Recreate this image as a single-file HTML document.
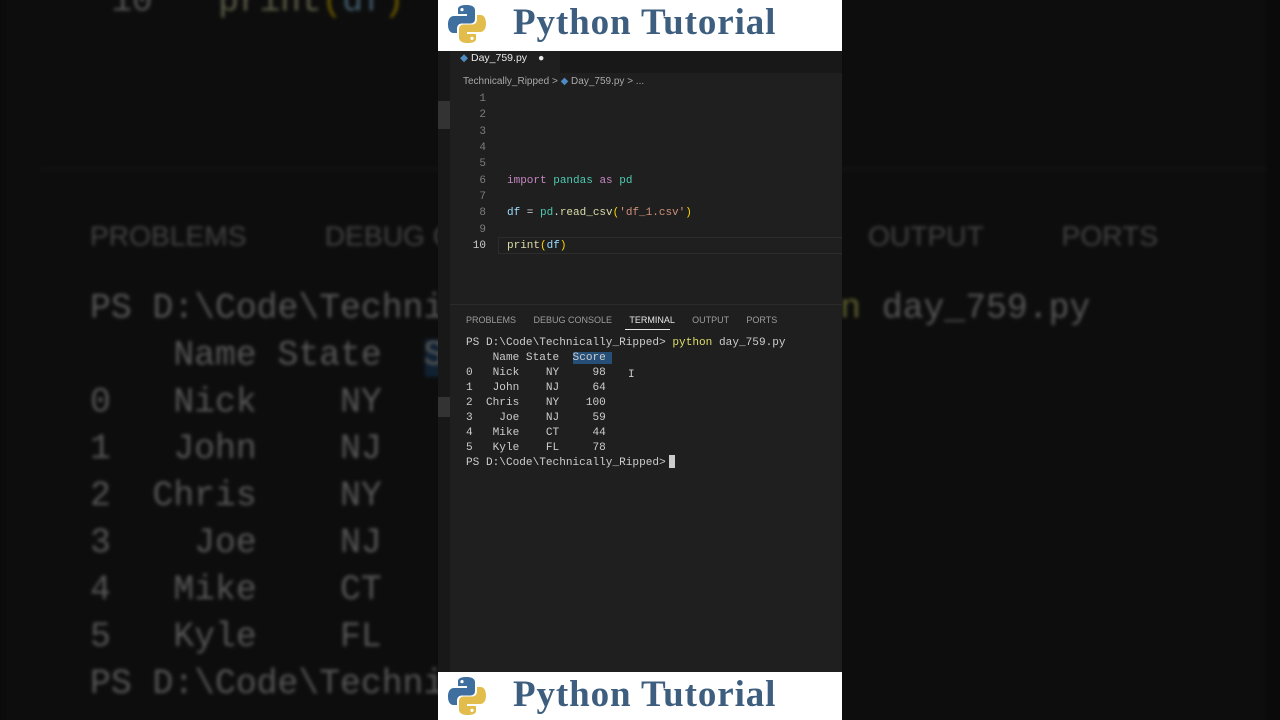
<!DOCTYPE html>
<html><head><meta charset="utf-8">
<style>
*{margin:0;padding:0;box-sizing:border-box}
html,body{width:1280px;height:720px;overflow:hidden;background:#0a0a0a}
#root{position:relative;width:1280px;height:720px;overflow:hidden;clip-path:inset(0)}
#clip{position:absolute;left:0;top:0;width:1280px;height:720px;overflow:hidden;clip-path:inset(0)}
.mono{font-family:"Liberation Mono","DejaVu Sans Mono",monospace}
.sans{font-family:"Liberation Sans","DejaVu Sans",sans-serif}
.layer{position:absolute;left:0;top:0;width:1280px;height:720px}
.bg{transform-origin:0 0;transform:translate(-1368.6px,-765.6px) scale(3.13);filter:brightness(0.42) blur(0.6px)}
.vs{position:absolute;left:438px;top:51px;width:404px;height:621px;background:#1f1f1f;overflow:hidden}
.strip{position:absolute;left:0;top:0;width:12px;height:621px;background:#181818}
.tabbar{position:absolute;left:12px;top:0;width:392px;height:22px;background:#181818}
.tab{position:absolute;left:0;top:0;width:110px;height:22px;background:#1f1f1f;color:#e8e8e8;font-size:10.5px;line-height:12px;padding:1px 0 0 10px}
.ln{position:absolute;left:30px;width:18px;text-align:right;color:#7d7d7d;font-size:11px}
.code{position:absolute;left:69px;font-size:11px;color:#d4d4d4;white-space:pre}
.term{position:absolute;left:28px;font-size:11.1px;color:#cccccc;white-space:pre;line-height:15px}
.hdr{position:absolute;left:438px;width:404px;height:51px;background:#fff;overflow:hidden}
.hdr span{position:absolute;left:75px;top:1px;font-family:"Liberation Serif","DejaVu Serif",serif;font-weight:bold;font-size:37px;color:#3d5e7e;letter-spacing:0.9px;white-space:nowrap;line-height:44px}
.hdr svg{position:absolute;left:9px;top:4px}
</style></head><body><div id="root">

<div id="clip"><div class="layer bg">
 <div class="vs">
  <div style="position:absolute;left:12px;top:247px;width:392px;height:1px;background:#2b2b2b"></div>
  <div class="sans" style="position:absolute;top:264px;left:28px;font-size:9px;color:#9d9d9d;white-space:pre">PROBLEMS          DEBUG CONSOLE          <span style="color:#e7e7e7">TERMINAL</span>          OUTPUT          PORTS</div>
  <div class="term mono" style="top:286px">PS D:\Code\Technically_Ripped&gt; <span style="color:#dcdc6a">python</span> day_759.py
    Name State  <span style="background:#264f78">Score </span>
0   Nick    NY     98
1   John    NJ     64
2  Chris    NY    100
3    Joe    NJ     59
4   Mike    CT     44
5   Kyle    FL     78
PS D:\Code\Technically_Ripped&gt; </div>
  <div class="ln mono" style="top:189px;color:#ccc">10</div>
  <div class="code mono" style="top:189px"><span style="color:#dcdcaa">print</span><span style="color:#ffd700">(</span><span style="color:#9cdcfe">df</span><span style="color:#ffd700">)</span></div>
 </div>
</div></div>

<div class="hdr" style="top:0"><svg width="40" height="40" viewBox="0 0 40 40"><path d="M19.5 1c-9 0-8.5 4-8.5 4v5h9v2H7s-6-.5-6 8.5 5.5 8.5 5.5 8.5H10v-4.5s0-5 5-5h8.5s4.5 0 4.5-4.5V6s.5-5-8.5-5zm-4.5 3a1.6 1.6 0 110 3.2A1.6 1.6 0 0115 4z" fill="#3f6f9f"/><path d="M20.5 39c9 0 8.5-4 8.5-4v-5h-9v-2h13s6 .5 6-8.5-5.5-8.5-5.5-8.5H30v4.5s0 5-5 5h-8.5S12 20.5 12 25v8.5s-.5 5.5 8.5 5.5zm4.5-3a1.6 1.6 0 110-3.2 1.6 1.6 0 010 3.2z" fill="#e2bd4c"/></svg><span>Python Tutorial</span></div>

<div class="vs">
 <div class="strip"></div>
 <div style="position:absolute;left:0;top:50px;width:12px;height:28px;background:#333"></div>
 <div style="position:absolute;left:0;top:346px;width:12px;height:20px;background:#333"></div>
 <div class="tabbar"><div class="tab sans"><span style="color:#4d8bc2">◆</span> Day_759.py <span style="margin-left:8px;color:#e8e8e8">●</span></div></div>
 <div class="sans" style="position:absolute;left:25px;top:25px;font-size:10px;color:#a9a9a9;white-space:pre">Technically_Ripped &gt; <span style="color:#4d8bc2">◆</span> Day_759.py &gt; ...</div>
 <div class="ln mono" style="top:42px">1</div>
 <div class="ln mono" style="top:58px">2</div>
 <div class="ln mono" style="top:75px">3</div>
 <div class="ln mono" style="top:91px">4</div>
 <div class="ln mono" style="top:107px">5</div>
 <div class="ln mono" style="top:124px">6</div>
 <div class="ln mono" style="top:140px">7</div>
 <div class="ln mono" style="top:156px">8</div>
 <div class="ln mono" style="top:173px">9</div>
 <div class="ln mono" style="top:189px;color:#ccc">10</div>
 <div class="code mono" style="top:124px"><span style="color:#c586c0">import</span> <span style="color:#4ec9b0">pandas</span> <span style="color:#c586c0">as</span> <span style="color:#4ec9b0">pd</span></div>
 <div class="code mono" style="top:156px"><span style="color:#9cdcfe">df</span> = <span style="color:#4ec9b0">pd</span>.<span style="color:#dcdcaa">read_csv</span><span style="color:#ffd700">(</span><span style="color:#ce9178">'df_1.csv'</span><span style="color:#ffd700">)</span></div>
 <div style="position:absolute;left:60px;top:186px;width:344px;height:17px;border:1px solid #2c2c2c;border-right:none"></div>
 <div class="code mono" style="top:189px"><span style="color:#dcdcaa">print</span><span style="color:#ffd700">(</span><span style="color:#9cdcfe">df</span><span style="color:#ffd700">)</span></div>
 <div style="position:absolute;left:12px;top:253px;width:392px;height:1px;background:#2b2b2b"></div>
 <div class="sans" style="position:absolute;top:264px;left:28px;font-size:9px;color:#9d9d9d;white-space:pre">PROBLEMS       DEBUG CONSOLE       <span style="color:#e7e7e7">TERMINAL</span>       OUTPUT       PORTS</div>
 <div style="position:absolute;left:187px;top:278px;width:45px;height:1px;background:#e7e7e7"></div>
 <div class="term mono" style="top:285px">PS D:\Code\Technically_Ripped&gt; <span style="color:#dcdc6a">python</span> day_759.py
    Name State  <span style="background:#264f78">Score </span>
0   Nick    NY     98
1   John    NJ     64
2  Chris    NY    100
3    Joe    NJ     59
4   Mike    CT     44
5   Kyle    FL     78
PS D:\Code\Technically_Ripped&gt; </div>
 <div style="position:absolute;left:231px;top:404px;width:6px;height:13px;background:#ccc"></div>
 <div class="mono" style="position:absolute;left:190px;top:318px;color:#ccc;font-size:11px">I</div>
</div>

<div class="hdr" style="top:672px;height:48px"><svg width="40" height="40" viewBox="0 0 40 40"><path d="M19.5 1c-9 0-8.5 4-8.5 4v5h9v2H7s-6-.5-6 8.5 5.5 8.5 5.5 8.5H10v-4.5s0-5 5-5h8.5s4.5 0 4.5-4.5V6s.5-5-8.5-5zm-4.5 3a1.6 1.6 0 110 3.2A1.6 1.6 0 0115 4z" fill="#3f6f9f"/><path d="M20.5 39c9 0 8.5-4 8.5-4v-5h-9v-2h13s6 .5 6-8.5-5.5-8.5-5.5-8.5H30v4.5s0 5-5 5h-8.5S12 20.5 12 25v8.5s-.5 5.5 8.5 5.5zm4.5-3a1.6 1.6 0 110-3.2 1.6 1.6 0 010 3.2z" fill="#e2bd4c"/></svg><span>Python Tutorial</span></div>
</div></body></html>
